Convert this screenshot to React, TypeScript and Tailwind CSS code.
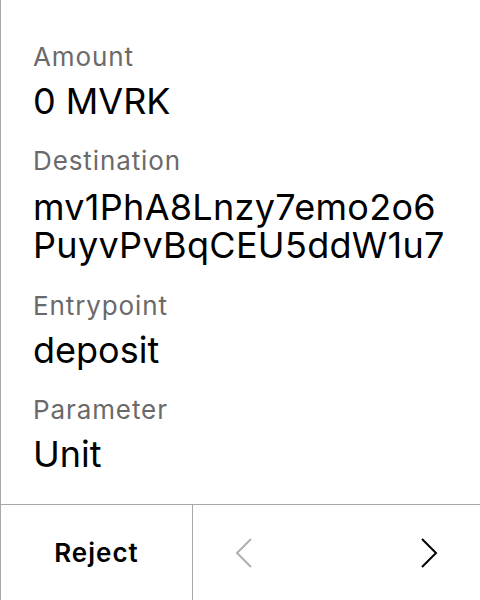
import React from "react";

const font = { fontFamily: "Inter, 'Noto Sans', sans-serif" };

function Label({ children }: { children: React.ReactNode }) {
  return <div className="text-[26px] leading-[32px] tracking-[0.9px] text-[#6a6a6a]">{children}</div>;
}

export default function App() {
  return (
    <div style={font} className="w-[480px] h-[600px] bg-white border-l border-[#a8a8a8] flex flex-col overflow-hidden">
      <div className="flex-1 flex flex-col pl-[32px] pt-[41px]">
        <Label>Amount</Label>
        <div className="mt-[8px] text-[36px] leading-[40px] text-black">0 MVRK</div>
        <div className="mt-[24px]">
          <Label>Destination</Label>
        </div>
        <div className="mt-[11px] text-[36px] leading-[38px] tracking-[0.3px] text-black">
          <div>mv1PhA8Lnzy7emo2o6</div>
          <div>PuyvPvBqCEU5ddW1u7</div>
        </div>
        <div className="mt-[26px]">
          <Label>Entrypoint</Label>
        </div>
        <div className="mt-[8px] text-[36px] leading-[40px] text-black">deposit</div>
        <div className="mt-[24px]">
          <Label>Parameter</Label>
        </div>
        <div className="mt-[8px] text-[36px] leading-[40px] text-black">Unit</div>
      </div>
      <div className="h-[96px] border-t border-[#a8a8a8] flex">
        <div className="w-[192px] border-r border-[#a8a8a8] flex items-center justify-center">
          <span className="text-[26px] tracking-[1px] font-semibold text-black">Reject</span>
        </div>
        <div className="flex-1 flex items-center justify-between pl-[42px] pr-[42px]">
          <svg width="18" height="32" viewBox="0 0 18 32" fill="none">
            <polyline points="16,2 2,16 16,30" stroke="#b0b0b0" strokeWidth="2" />
          </svg>
          <svg width="18" height="32" viewBox="0 0 18 32" fill="none">
            <polyline points="2,2 16,16 2,30" stroke="#000" strokeWidth="2" />
          </svg>
        </div>
      </div>
    </div>
  );
}
